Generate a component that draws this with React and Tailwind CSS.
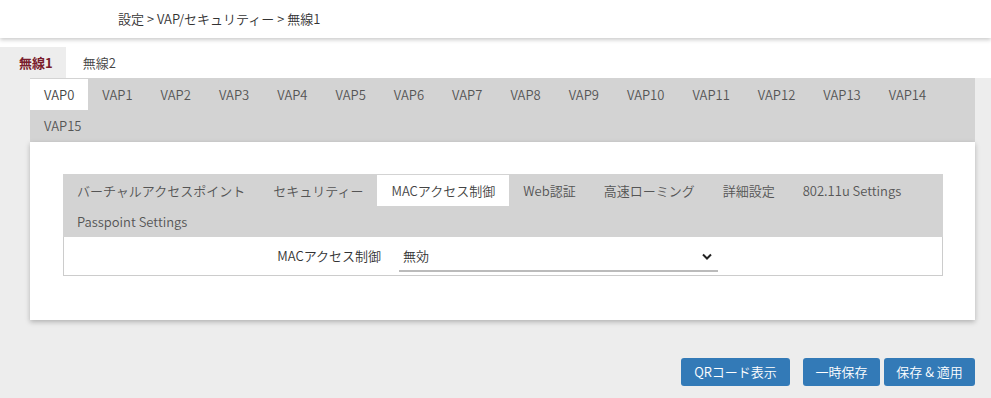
import { useState } from "react";

const vaps = Array.from({ length: 16 }, (_, i) => `VAP${i}`);
const subTabs = [
  "バーチャルアクセスポイント",
  "セキュリティー",
  "MACアクセス制御",
  "Web認証",
  "高速ローミング",
  "詳細設定",
  "802.11u Settings",
  "Passpoint Settings",
];

const App = () => {
  const [radio, setRadio] = useState("無線1");
  const [vap, setVap] = useState("VAP0");
  const [sub, setSub] = useState("MACアクセス制御");

  return (
    <div
      className="w-[991px] h-[398px] bg-[#ededed] text-[#444] text-[13px] font-[350] overflow-hidden"
      style={{ fontFamily: '"Noto Sans CJK JP", "Noto Sans", sans-serif' }}
    >
      {/* Header */}
      <div className="relative z-10 h-[38px] bg-white shadow-[0_2px_4px_rgba(0,0,0,0.2)] flex items-center pl-[118px] text-[#333]">
        設定&nbsp;&gt;&nbsp;VAP/セキュリティー&nbsp;&gt;&nbsp;無線1
      </div>

      {/* Radio tabs */}
      <div className="bg-white pt-[9px] flex">
        {["無線1", "無線2"].map((r) => (
          <button
            key={r}
            onClick={() => setRadio(r)}
            className={`h-[31px] leading-[31px] ${
              radio === r
                ? "bg-[#ededed] text-[#7a1c2c] font-bold pl-[19px] pr-[13px]"
                : "text-[#444] pl-[17px] pr-[13px]"
            }`}
          >
            {r}
          </button>
        ))}
      </div>

      <div className="pl-[30px] pr-[16px]">
        {/* VAP tabs */}
        <div className="bg-[#d3d3d3] flex flex-wrap pt-[1px] pb-[1px]">
          {vaps.map((v) => (
            <button
              key={v}
              onClick={() => setVap(v)}
              className={`h-[31px] px-[14px] text-[13px] ${
                vap === v ? "bg-white text-[#444]" : "text-[#555]"
              }`}
            >
              {v}
            </button>
          ))}
        </div>

        {/* Card */}
        <div className="bg-white shadow-[0_2px_5px_rgba(0,0,0,0.25)] pt-[32px] pb-[44px] pl-[33px] pr-[32px]">
          <div className="bg-[#d3d3d3] flex flex-wrap pt-[1px]">
            {subTabs.map((s) => (
              <button
                key={s}
                onClick={() => setSub(s)}
                className={`h-[31px] px-[14px] text-[13px] ${
                  sub === s ? "bg-white text-[#444]" : "text-[#555]"
                }`}
              >
                {s}
              </button>
            ))}
          </div>
          <div className="border border-[#cccccc] border-t-0 h-[39px] flex items-center">
            <div className="w-[317px] text-right text-[#333]">MACアクセス制御</div>
            <div className="ml-[18px] w-[319px] h-[30px] border-b-2 border-[#bbbbbb] flex items-center justify-between pl-[4px] pr-[6px] mt-[2px]">
              <span className="text-[#333]">無効</span>
              <svg width="10" height="7" viewBox="0 0 10 7">
                <path d="M1 1.5 L5 5.5 L9 1.5" fill="none" stroke="#222" strokeWidth="2" />
              </svg>
            </div>
          </div>
        </div>

        {/* Buttons */}
        <div className="flex justify-end mt-[38px]">
          <button className="h-[28px] w-[109px] bg-[#337ab7] text-white rounded-[3px]">QRコード表示</button>
          <button className="h-[28px] w-[77px] ml-[13px] bg-[#337ab7] text-white rounded-[3px]">一時保存</button>
          <button className="h-[28px] w-[91px] ml-[4px] bg-[#337ab7] text-white rounded-[3px]">保存 &amp; 適用</button>
        </div>
      </div>
    </div>
  );
};

export default App;
